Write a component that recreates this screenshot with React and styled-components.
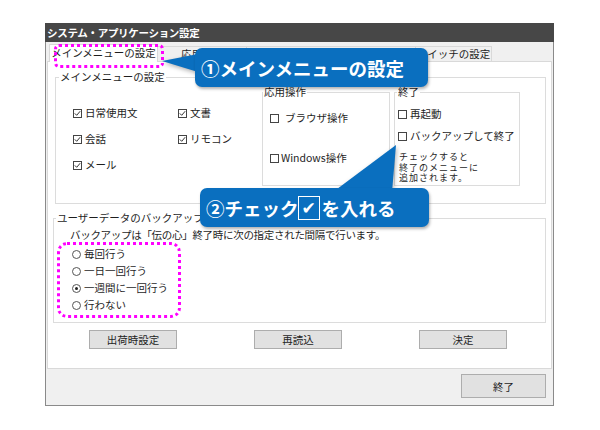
import React from "react";
import styled, { createGlobalStyle } from "styled-components";

const GlobalStyle = createGlobalStyle`
  *, *::before, *::after { box-sizing: border-box; }
  html, body { margin: 0; padding: 0; background: #fff; }
  body {
    font-family: "Noto Sans CJK JP", "Noto Sans", sans-serif;
    color: #1e1e1e;
  }
`;

const Page = styled.div`
  position: relative;
  width: 600px;
  height: 430px;
  padding: 23px 0 0 45px;
  overflow: hidden;
`;

const Window = styled.div`
  width: 509px;
  display: flex;
  flex-direction: column;
`;

const TitleBar = styled.div`
  height: 19px;
  background: #474747;
  color: #fff;
  font-size: 10.5px;
  font-weight: bold;
  line-height: 19px;
  padding-left: 2px;
  letter-spacing: -0.3px;
`;

const Body = styled.div`
  height: 364px;
  background: #f0f0f0;
  border: 1px solid #8a8a8a;
  border-top: none;
  padding: 2px 1px 0;
  display: flex;
  flex-direction: column;
`;

const TabRow = styled.div`
  display: flex;
  align-items: flex-end;
  height: 17px;
  padding-left: 2px;
  position: relative;
  z-index: 1;
`;

const Tab = styled.div`
  width: ${(p) => p.$w}px;
  height: ${(p) => (p.$active ? 18 : 15)}px;
  margin-bottom: ${(p) => (p.$active ? -1 : 0)}px;
  margin-left: -1px;
  background: ${(p) => (p.$active ? "#fff" : "#f0f0f0")};
  border: 1px solid #d9d9d9;
  border-bottom: none;
  font-size: 10.5px;
  line-height: ${(p) => (p.$active ? 16 : 14)}px;
  text-align: center;
  white-space: nowrap;
  overflow: hidden;
  &:first-child { margin-left: 0; }
`;

const Panel = styled.div`
  height: 308px;
  background: #fff;
  border: 1px solid #d9d9d9;
  padding: 8px 5px 0 5px;
  display: flex;
  flex-direction: column;
`;

const Group = styled.fieldset`
  margin: ${(p) => p.$top || 0}px 0 0 ${(p) => p.$indent || 0}px;
  padding: 0;
  min-width: 0;
  border: 1px solid #dcdcdc;
`;

const Legend = styled.legend`
  margin-left: ${(p) => p.$offset || 0}px;
  padding: 0 1px;
  font-size: 10.5px;
  line-height: 14px;
  white-space: nowrap;
`;

const MainRow = styled.div`
  height: 119px;
  display: flex;
  align-items: flex-start;
  padding-left: 17px;
`;

const CheckGrid = styled.div`
  width: 189px;
  margin-top: 22px;
  display: grid;
  grid-template-columns: 105px 1fr;
  row-gap: 12px;
`;

const SubGroup = styled.fieldset`
  width: ${(p) => p.$w}px;
  height: 101px;
  margin: 1px 0 0 ${(p) => p.$gap || 0}px;
  padding: 0;
  min-width: 0;
  border: 1px solid #dcdcdc;
  display: flex;
  flex-direction: column;
`;

const SubBody = styled.div`
  display: flex;
  flex-direction: column;
  gap: ${(p) => p.$gap}px;
  padding: ${(p) => p.$top}px 0 0 ${(p) => p.$left}px;
`;

const Item = styled.label`
  display: flex;
  align-items: center;
  height: 14px;
  gap: ${(p) => (p.$gap == null ? 3 : p.$gap)}px;
  font-size: 10.5px;
  line-height: 14px;
  white-space: nowrap;
`;

const Box = styled.span`
  width: 9px;
  height: 9px;
  border: 1px solid #444;
  background: #fff;
  display: inline-flex;
  flex: none;
`;

const Note = styled.div`
  margin: 9px 0 0 4px;
  font-size: 9px;
  line-height: 10.5px;
  letter-spacing: 1px;
  white-space: pre;
`;

const BackupBody = styled.div`
  height: 97px;
  padding: 3px 0 0 16px;
  display: flex;
  flex-direction: column;
`;

const Lead = styled.div`
  font-size: 10.5px;
  line-height: 14px;
  letter-spacing: -0.3px;
  white-space: nowrap;
`;

const RadioList = styled.div`
  margin: 5px 0 0 2px;
  display: flex;
  flex-direction: column;
  gap: 3px;
`;

const Circle = styled.span`
  width: 9px;
  height: 9px;
  border-radius: 50%;
  border: 1px solid #555;
  background: #fff;
  display: inline-flex;
  align-items: center;
  justify-content: center;
  flex: none;
  &::after {
    content: "";
    width: 3px;
    height: 3px;
    border-radius: 50%;
    background: ${(p) => (p.$on ? "#222" : "transparent")};
  }
`;

const ButtonRow = styled.div`
  display: flex;
  gap: 77px;
  padding-left: 36px;
  margin-top: 7px;
`;

const Button = styled.button`
  width: ${(p) => p.$w}px;
  height: ${(p) => p.$h}px;
  padding: 0;
  background: #e1e1e1;
  border: 1px solid #adadad;
  font-family: inherit;
  font-size: 10.5px;
  color: #1e1e1e;
`;

const Footer = styled.div`
  display: flex;
  justify-content: flex-end;
  padding: 5px 6px 0 0;
`;

const Highlight = styled.div`
  position: absolute;
  z-index: 2;
  left: ${(p) => p.$x}px;
  top: ${(p) => p.$y}px;
  width: ${(p) => p.$w}px;
  height: ${(p) => p.$h}px;
  border: 3px dotted #ff00ff;
  border-radius: ${(p) => p.$r}px;
  pointer-events: none;
`;

const Tails = styled.svg`
  position: absolute;
  z-index: 3;
  left: 0;
  top: 0;
  pointer-events: none;
  filter: drop-shadow(1px 2px 2px rgba(0, 0, 0, 0.3));
`;

const Callout = styled.div`
  position: absolute;
  z-index: 4;
  left: ${(p) => p.$x}px;
  top: ${(p) => p.$y}px;
  width: ${(p) => p.$w}px;
  height: 39px;
  padding-left: 6px;
  display: flex;
  align-items: center;
  background: #0a6fbf;
  border-radius: 7px;
  box-shadow: 1px 2px 3px rgba(0, 0, 0, 0.3);
  color: #fff;
  font-size: 18.5px;
  font-weight: bold;
  white-space: nowrap;
`;

const CheckMark = styled.span`
  display: inline-flex;
  align-items: center;
  justify-content: center;
  width: 22px;
  height: 24px;
  margin: 0 2px 0 -1px;
  border: 1px solid #fff;
  font-family: "DejaVu Sans", sans-serif;
  font-size: 17px;
`;

const Check = ({ on, gap, children }) => (
  <Item $gap={gap}>
    <Box>
      {on && (
        <svg width="7" height="7" viewBox="0 0 7 7">
          <path d="M0.8 3.4 L2.7 5.3 L6.2 1.2" fill="none" stroke="#333" strokeWidth="1" />
        </svg>
      )}
    </Box>
    {children}
  </Item>
);

const Radio = ({ on, children }) => (
  <Item $gap={3}>
    <Circle $on={on} />
    {children}
  </Item>
);

export default function App() {
  return (
    <>
      <GlobalStyle />
      <Page>
        <Window>
          <TitleBar>システム・アプリケーション設定</TitleBar>
          <Body>
            <TabRow>
              <Tab $active $w={109}>メインメニューの設定</Tab>
              <Tab $w={90}>応用設定</Tab>
              <Tab $w={170}>読み上げ・音声の設定</Tab>
              <Tab $w={77}>スイッチの設定</Tab>
            </TabRow>
            <Panel>
              <Group $indent={2}>
                <Legend $offset={3}>メインメニューの設定</Legend>
                <MainRow>
                  <CheckGrid>
                    <Check on>日常使用文</Check>
                    <Check on>文書</Check>
                    <Check on>会話</Check>
                    <Check on>リモコン</Check>
                    <Check on>メール</Check>
                  </CheckGrid>
                  <SubGroup $w={128}>
                    <Legend>応用操作</Legend>
                    <SubBody $top={12} $left={7} $gap={26}>
                      <Check gap={6}>ブラウザ操作</Check>
                      <Check gap={2}>Windows操作</Check>
                    </SubBody>
                  </SubGroup>
                  <SubGroup $w={126} $gap={4}>
                    <Legend $offset={2}>終了</Legend>
                    <SubBody $top={8} $left={3} $gap={8}>
                      <Check gap={3}>再起動</Check>
                      <Check gap={3}>バックアップして終了</Check>
                    </SubBody>
                    <Note>{"チェックすると\n終了のメニューに\n追加されます。"}</Note>
                  </SubGroup>
                </MainRow>
              </Group>
              <Group $top={7}>
                <Legend $offset={2}>ユーザーデータのバックアップ設定</Legend>
                <BackupBody>
                  <Lead>バックアップは「伝の心」終了時に次の指定された間隔で行います。</Lead>
                  <RadioList>
                    <Radio>毎回行う</Radio>
                    <Radio>一日一回行う</Radio>
                    <Radio on>一週間に一回行う</Radio>
                    <Radio>行わない</Radio>
                  </RadioList>
                </BackupBody>
              </Group>
              <ButtonRow>
                <Button $w={88} $h={19}>出荷時設定</Button>
                <Button $w={88} $h={19}>再読込</Button>
                <Button $w={88} $h={19}>決定</Button>
              </ButtonRow>
            </Panel>
            <Footer>
              <Button $w={85} $h={24}>終了</Button>
            </Footer>
          </Body>
        </Window>

        <Highlight $x={54} $y={44} $w={110} $h={24} $r={5} />
        <Highlight $x={57} $y={242} $w={124} $h={76} $r={10} />

        <Tails width="600" height="430">
          <polygon points="162,61 198,54 198,72" fill="#0a6fbf" />
          <polygon points="333,192 396,145 392,192" fill="#0a6fbf" />
        </Tails>
        <Callout $x={195} $y={48} $w={233}>①メインメニューの設定</Callout>
        <Callout $x={200} $y={188} $w={229}>
          ②チェック<CheckMark>✔</CheckMark>を入れる
        </Callout>
      </Page>
    </>
  );
}
